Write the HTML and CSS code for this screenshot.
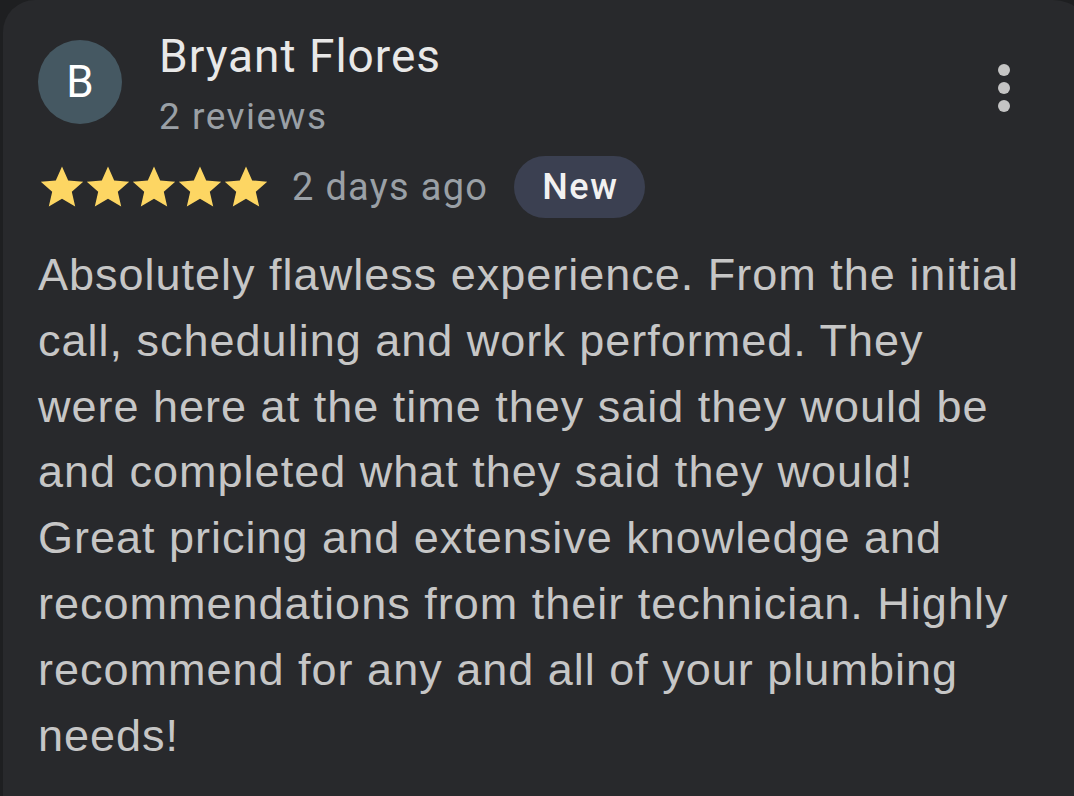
FILE: index.html
```html
<!DOCTYPE html>
<html>
<head>
<meta charset="utf-8">
<link rel="stylesheet" href="styles.css">
</head>
<body>
<div class="card">
  <div class="head">
    <div class="avatar">B</div>
    <div class="who">
      <div class="name">Bryant Flores</div>
      <div class="count">2 reviews</div>
    </div>
    <div class="more"><span></span><span></span><span></span></div>
  </div>
  <div class="meta">
    <div class="stars">
      <svg viewBox="0 0 24 24"><path d="M12 1.8l3.1 6.9 7.5.7-5.7 5 1.7 7.4L12 17.9l-6.6 3.9 1.7-7.4-5.7-5 7.5-.7z"/></svg>
      <svg viewBox="0 0 24 24"><path d="M12 1.8l3.1 6.9 7.5.7-5.7 5 1.7 7.4L12 17.9l-6.6 3.9 1.7-7.4-5.7-5 7.5-.7z"/></svg>
      <svg viewBox="0 0 24 24"><path d="M12 1.8l3.1 6.9 7.5.7-5.7 5 1.7 7.4L12 17.9l-6.6 3.9 1.7-7.4-5.7-5 7.5-.7z"/></svg>
      <svg viewBox="0 0 24 24"><path d="M12 1.8l3.1 6.9 7.5.7-5.7 5 1.7 7.4L12 17.9l-6.6 3.9 1.7-7.4-5.7-5 7.5-.7z"/></svg>
      <svg viewBox="0 0 24 24"><path d="M12 1.8l3.1 6.9 7.5.7-5.7 5 1.7 7.4L12 17.9l-6.6 3.9 1.7-7.4-5.7-5 7.5-.7z"/></svg>
    </div>
    <span class="ago">2 days ago</span>
    <span class="badge">New</span>
  </div>
  <p class="text">Absolutely flawless experience. From the initial<br>call, scheduling and work performed. They<br>were here at the time they said they would be<br>and completed what they said they would!<br>Great pricing and extensive knowledge and<br>recommendations from their technician. Highly<br>recommend for any and all of your plumbing<br>needs!</p>
</div>
</body>
</html>
```
FILE: styles.css
```css
html, body {
  margin: 0;
  padding: 0;
  background: #1e1f21;
  width: 1074px;
  height: 796px;
  overflow: hidden;
}
.card {
  margin-left: 3px;
  width: 1090px;
  height: 830px;
  background: #28292c;
  border-radius: 32px 40px 0 0;
  box-sizing: border-box;
  padding: 0 0 0 35px;
}
.head {
  display: flex;
  align-items: flex-start;
  padding-top: 28px;
  width: 1036px;
}
.avatar {
  width: 84px;
  height: 84px;
  border-radius: 50%;
  background: #455862;
  color: #ffffff;
  font-family: Roboto, sans-serif;
  font-size: 44px;
  display: flex;
  align-items: center;
  justify-content: center;
  margin-top: 12px;
  flex: none;
}
.who {
  margin-left: 37px;
  flex: 1;
}
.name {
  font-family: Roboto, sans-serif;
  font-size: 46px;
  letter-spacing: 1px;
  color: #e8e8e8;
  line-height: 56px;
}
.count {
  font-family: Roboto, sans-serif;
  font-size: 37px;
  letter-spacing: 1.5px;
  color: #9aa0a6;
  line-height: 44px;
  margin-top: 11px;
}
.more {
  display: flex;
  flex-direction: column;
  gap: 6px;
  margin-top: 36px;
  margin-right: 64px;
}
.more span {
  width: 12px;
  height: 12px;
  border-radius: 50%;
  background: #c4c4c4;
}
.meta {
  display: flex;
  align-items: center;
  margin-top: 17px;
  height: 62px;
}
.stars {
  display: flex;
}
.stars svg {
  width: 48px;
  height: 48px;
  fill: #fdd663;
  margin-right: -2px;
}
.ago {
  font-family: Roboto, sans-serif;
  font-size: 38px;
  letter-spacing: 1.3px;
  color: #9aa0a6;
  margin-left: 24px;
}
.badge {
  margin-left: 26px;
  background: #3b4051;
  color: #f1f1f1;
  font-family: Roboto, sans-serif;
  font-weight: 500;
  font-size: 36px;
  letter-spacing: 1.5px;
  height: 62px;
  padding: 0 27px 0 28px;
  border-radius: 31px;
  display: flex;
  align-items: center;
}
.text {
  margin: 24px 0 0 0;
  width: 1036px;
  white-space: nowrap;
  font-family: "Liberation Sans", sans-serif;
  font-size: 45px;
  letter-spacing: 1px;
  line-height: 65.8px;
  color: #c6c6c6;
}
```
